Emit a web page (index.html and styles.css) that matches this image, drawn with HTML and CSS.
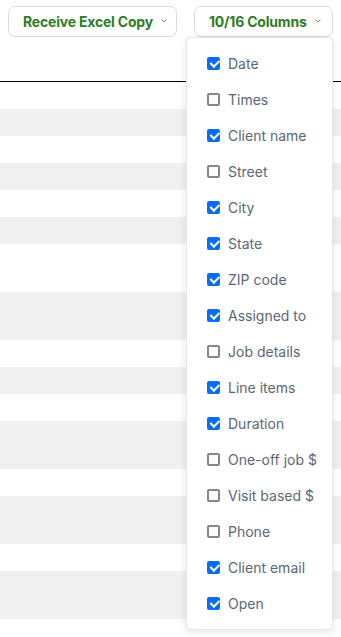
FILE: index.html
```html
<!DOCTYPE html>
<html>
<head>
<meta charset="utf-8">
<link rel="stylesheet" href="styles.css">
</head>
<body>
<div class="page">
  <div class="toolbar">
    <button class="btn btn-excel"><span class="btn-label">Receive Excel Copy</span><svg class="chev" width="6" height="4" viewBox="0 0 6 4"><path d="M0.6 0.7 L3 3 L5.4 0.7" fill="none" stroke="#6f8a6a" stroke-width="1"/></svg></button>
    <button class="btn btn-cols"><span class="btn-label">10/16 Columns</span><svg class="chev" width="6" height="4" viewBox="0 0 6 4"><path d="M0.6 0.7 L3 3 L5.4 0.7" fill="none" stroke="#6f8a6a" stroke-width="1"/></svg></button>
  </div>
  <div class="table">
    <div class="thead"></div>
    <div class="row s"></div>
    <div class="row g s"></div>
    <div class="row s"></div>
    <div class="row g s"></div>
    <div class="row s"></div>
    <div class="row g s"></div>
    <div class="row t"></div>
    <div class="row g t"></div>
    <div class="row s"></div>
    <div class="row g s"></div>
    <div class="row s"></div>
    <div class="row g t"></div>
    <div class="row s"></div>
    <div class="row g t"></div>
    <div class="row s"></div>
    <div class="row g t"></div>
    <div class="row s"></div>
  </div>
  <div class="menu">
    <label class="item"><span class="cb on"></span>Date</label>
    <label class="item"><span class="cb"></span>Times</label>
    <label class="item"><span class="cb on"></span>Client name</label>
    <label class="item"><span class="cb"></span>Street</label>
    <label class="item"><span class="cb on"></span>City</label>
    <label class="item"><span class="cb on"></span>State</label>
    <label class="item"><span class="cb on"></span>ZIP code</label>
    <label class="item"><span class="cb on"></span>Assigned to</label>
    <label class="item"><span class="cb"></span>Job details</label>
    <label class="item"><span class="cb on"></span>Line items</label>
    <label class="item"><span class="cb on"></span>Duration</label>
    <label class="item"><span class="cb"></span>One-off job $</label>
    <label class="item"><span class="cb"></span>Visit based $</label>
    <label class="item"><span class="cb"></span>Phone</label>
    <label class="item"><span class="cb on"></span>Client email</label>
    <label class="item"><span class="cb on"></span>Open</label>
  </div>
</div>
</body>
</html>
```
FILE: styles.css
```css
* { box-sizing: border-box; }
html, body { margin: 0; padding: 0; background: #fff; }
body { font-family: Inter, "Noto Sans", sans-serif; width: 341px; height: 637px; overflow: hidden; }
.page { position: relative; }
.toolbar { display: flex; gap: 17px; padding: 6px 8px 0 8px; height: 37px; }
.btn {
  display: flex; align-items: center; gap: 8px;
  height: 31px; padding: 0 0 0 14px;
  border: 1px solid #dcdcdc; border-radius: 7px; background: #fff;
  font-family: inherit; font-size: 14px; font-weight: 700; color: #2e7d1f;
  letter-spacing: -0.2px;
}
.btn-excel { width: 169px; }
.btn-cols { width: 139px; }
.chev { display: block; margin-top: -2px; flex: none; }
.table { display: flex; flex-direction: column; }
.thead { height: 45px; border-bottom: 1px solid #000; }
.row { flex: none; }
.row.s { height: 27px; }
.row.t { height: 48px; }
.row.g { background: #f0f0f0; }
.menu {
  position: absolute; left: 186px; top: 37px; width: 147px;
  padding: 7px 0 8px 0;
  background: #fff; border: 1px solid #e6e6e6; border-radius: 4px;
  box-shadow: 0 2px 8px rgba(0,0,0,0.10);
  display: flex; flex-direction: column;
}
.item {
  display: flex; align-items: center; gap: 8px;
  height: 36px; padding-left: 20px;
  font-size: 14px; color: #5b6776;
}
.cb {
  width: 13px; height: 13px; border-radius: 2px;
  border: 2px solid #86848f; background: #fff; flex: none;
  position: relative;
}
.cb.on { background: #0b6cf6; border-color: #0b6cf6; }
.cb.on::after {
  content: ""; position: absolute; left: 2.5px; top: -0.3px;
  width: 3.5px; height: 7px;
  border: solid #fff; border-width: 0 2px 2px 0;
  transform: rotate(45deg);
}
```
